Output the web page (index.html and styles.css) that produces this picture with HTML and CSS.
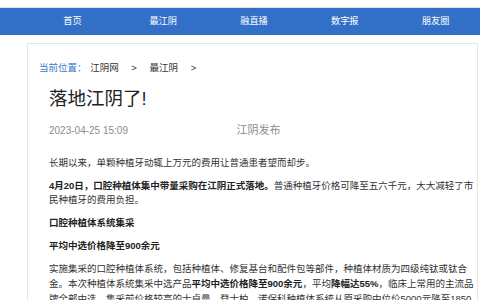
FILE: index.html
```html
<!DOCTYPE html>
<html lang="zh-CN">
<head>
    <meta charset="UTF-8">
    <title>落地江阴了！</title>
    <meta name="viewport" content="width=device-width, initial-scale=1">
    <link rel="stylesheet" href="styles.css">
</head>
<body>
    <div class="topline"></div>
    <nav class="nav">
        <a href="#">首页</a>
        <a href="#">最江阴</a>
        <a href="#">融直播</a>
        <a href="#">数字报</a>
        <a href="#">朋友圈</a>
    </nav>
    <main class="card">
        <div class="crumbs">
            <span class="here">当前位置：</span>
            <a href="#">江阴网</a>
            <span class="sep">&gt;</span>
            <a href="#">最江阴</a>
            <span class="sep">&gt;</span>
        </div>
        <article class="article">
            <h1>落地江阴了!</h1>
            <div class="meta">
                <span class="date">2023-04-25 15:09</span>
                <span class="source">江阴发布</span>
            </div>
            <div class="content">
                <p>长期以来，单颗种植牙动辄上万元的费用让普通患者望而却步。</p>
                <p><strong>4月20日，口腔种植体集中带量采购在江阴正式落地。</strong>普通种植牙价格可降至五六千元，大大减轻了市民种植牙的费用负担。</p>
                <p><strong>口腔种植体系统集采</strong></p>
                <p><strong>平均中选价格降至900余元</strong></p>
                <p>实施集采的口腔种植体系统，包括种植体、修复基台和配件包等部件，种植体材质为四级纯钛或钛合金。本次种植体系统集采中选产品<strong>平均中选价格降至900余元</strong>，平均<strong>降幅达55%</strong>，临床上常用的主流品牌全部中选。集采前价格较高的士卓曼、登士柏、诺保科种植体系统从原采购中位价5000元降至1850元左右。</p>
            </div>
        </article>
    </main>
</body>
</html>
```

FILE: styles.css
```css
body {
    margin: 0;
    padding: 0;
    background-color: #fff;
    font-family: "Liberation Sans", "Noto Sans CJK SC", sans-serif;
    color: #333;
}
a {
    text-decoration: none;
    color: inherit;
}
.topline {
    height: 7px;
    border-bottom: 1px solid #e2e2e2;
}
.nav {
    display: flex;
    height: 27px;
    padding-left: 27px;
    background-color: #3170c6;
}
.nav a {
    flex: 0 0 90.8px;
    text-align: center;
    color: #fff;
    font-size: 9.2px;
    line-height: 27px;
}
.card {
    margin: 8px 0 0 27px;
    width: 438px;
    min-height: 400px;
    padding: 17px 0 0 11px;
    border: 1px solid #e6e6e6;
    border-bottom: none;
}
.crumbs {
    font-size: 9.5px;
    line-height: 14px;
    color: #333;
}
.crumbs .here {
    color: #3a78cc;
    margin-right: 1px;
}
.crumbs .sep {
    margin: 0 10px;
}
.article {
    padding-left: 10px;
}
.article h1 {
    margin: 12px 0 0;
    font-size: 18.5px;
    line-height: 24px;
    font-weight: normal;
    color: #222;
}
.meta {
    margin-top: 10.5px;
    line-height: 14px;
    color: #8c8c8c;
}
.meta .date {
    display: inline-block;
    width: 183px;
    font-size: 10px;
}
.meta .source {
    font-size: 11px;
}
.content {
    margin-top: 18.4px;
}
.content p {
    margin: 0 0 8.4px;
    font-size: 9.5px;
    line-height: 14.6px;
    color: #333;
}
.content strong {
    color: #222;
}
```
